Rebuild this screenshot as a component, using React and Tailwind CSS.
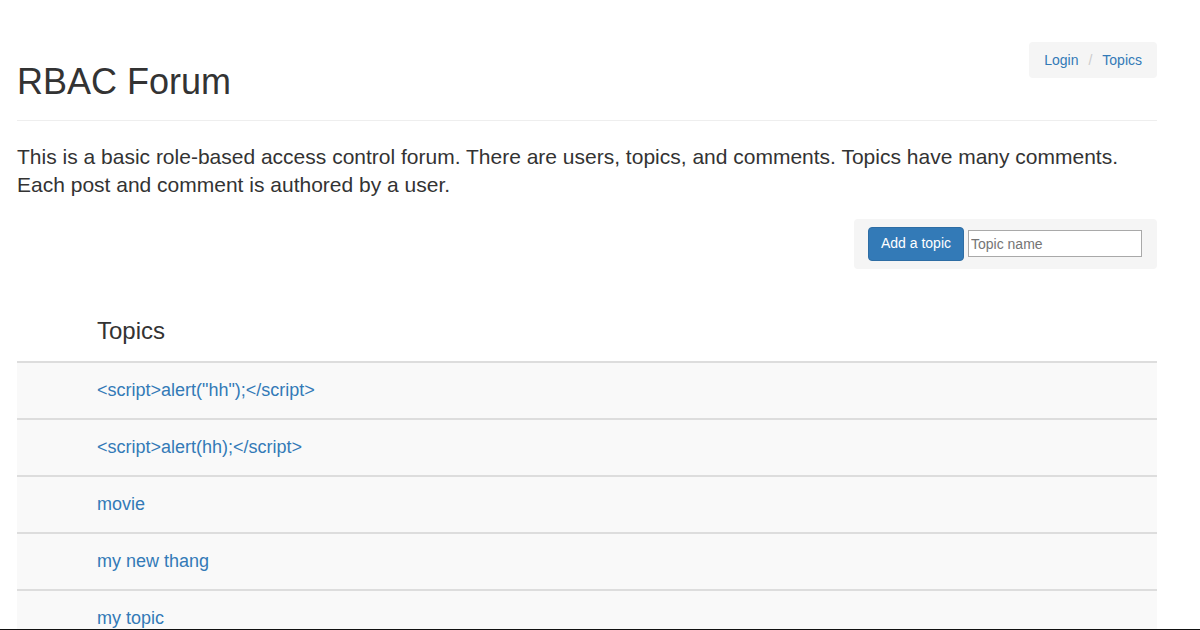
import React from 'react';

const topics = [
  '<script>alert("hh");</script>',
  '<script>alert(hh);</script>',
  'movie',
  'my new thang',
  'my topic',
];

export default function App() {
  return (
    <div className="h-[630px] overflow-hidden border-b border-[#111] bg-white text-[#333] font-['Helvetica','Liberation_Sans',Arial,sans-serif]">
      <div className="w-[1140px] ml-[17px] pt-[42px]">
        <div className="border-b border-[#eee] pb-[8px] flex justify-between items-start">
          <h1 className="mt-[20px] mb-[10px] text-[36px] leading-[1.1] font-normal">RBAC Forum</h1>
          <ol className="flex items-center bg-[#f5f5f5] rounded-[4px] px-[15px] py-[8px] text-[14px] leading-[20px]">
            <li><a className="text-[#337ab7]" href="#">Login</a></li>
            <li className="text-[#ccc] px-[10px]">/</li>
            <li><a className="text-[#337ab7]" href="#">Topics</a></li>
          </ol>
        </div>

        <p className="mt-[22px] text-[21px] leading-[28px]">
          This is a basic role-based access control forum. There are users, topics, and comments. Topics have many comments. Each post and comment is authored by a user.
        </p>

        <div className="flex justify-end mt-[20px]">
          <div className="flex items-center gap-[4px] bg-[#f5f5f5] rounded-[4px] pl-[14px] pr-[15px] py-[8px]">
            <button className="h-[34px] px-[12px] rounded-[4px] bg-[#337ab7] border border-[#2e6da4] text-white text-[14px]">Add a topic</button>
            <input
              className="w-[174px] h-[27px] border border-[#a9a9a9] px-[2px] text-[14px] placeholder:text-[#757575] bg-white"
              placeholder="Topic name"
            />
          </div>
        </div>

        <div className="mt-[33px]">
          <div className="h-[61px] flex items-center pl-[80px] text-[24px] border-b-2 border-[#ddd]">Topics</div>
          {topics.map((t) => (
            <div key={t} className="h-[57px] flex items-center pl-[80px] bg-[#f9f9f9] border-b-2 border-[#ddd] text-[18px]">
              <a className="text-[#337ab7]" href="#">{t}</a>
            </div>
          ))}
        </div>
      </div>
    </div>
  );
}
